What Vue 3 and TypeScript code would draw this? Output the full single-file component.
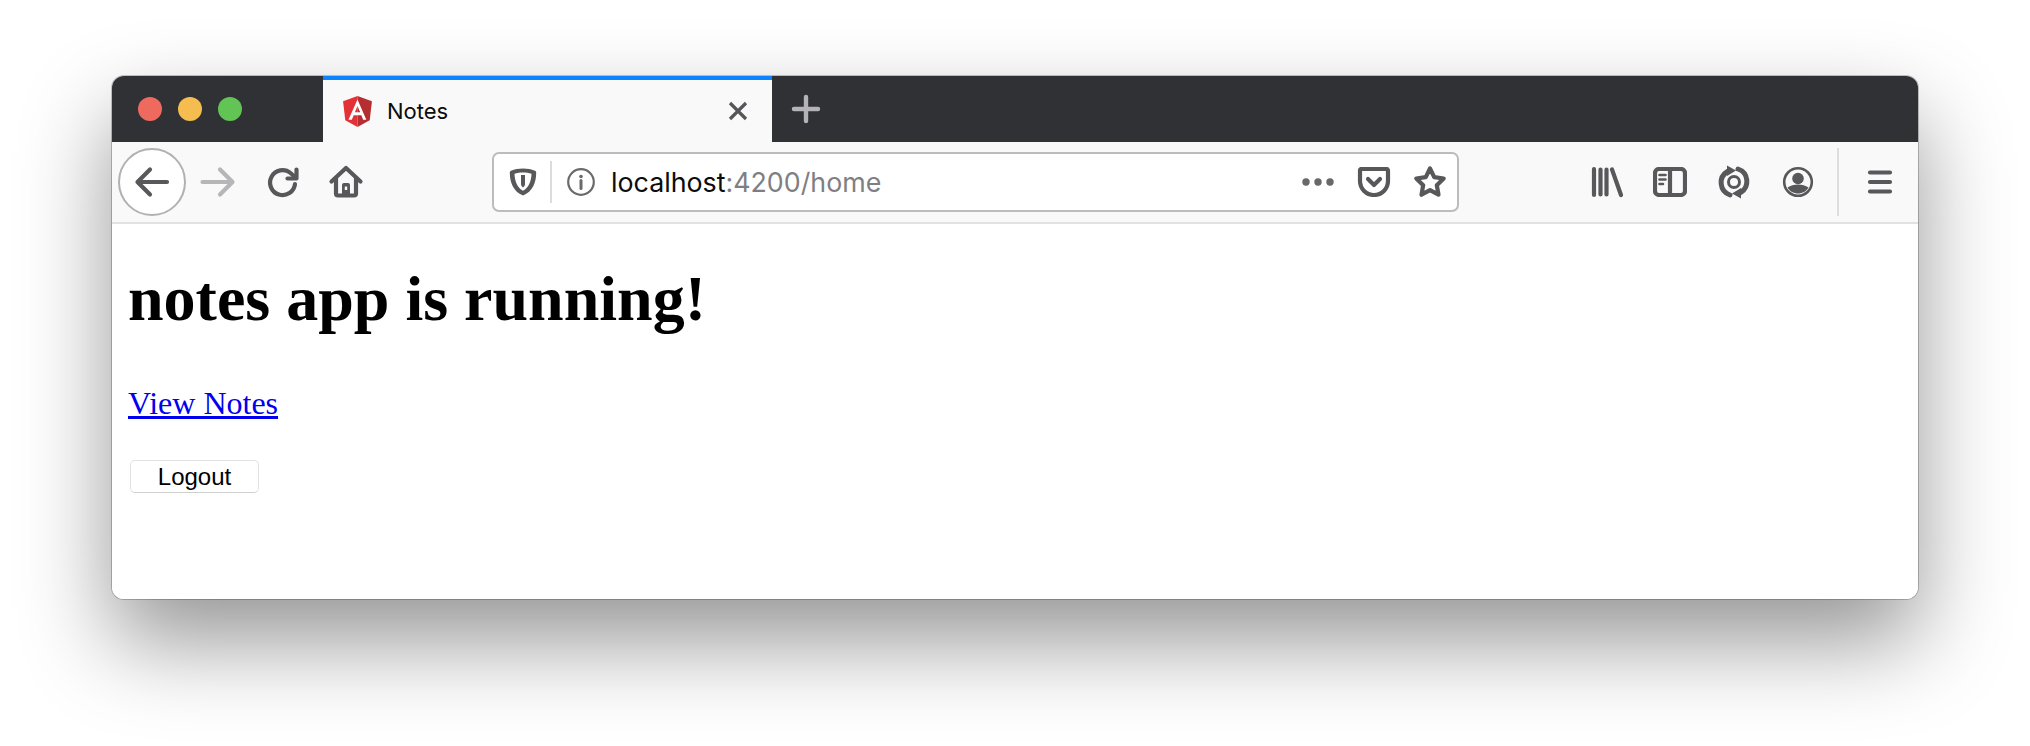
<template>
  <div class="stage">
    <div class="window">
      <div class="tabstrip">
        <div class="lights">
          <span v-for="c in lights" :key="c" class="light" :style="{ background: c }"></span>
        </div>
        <div class="tab">
          <svg class="favicon" viewBox="25 25 200 210" width="31" height="33">
            <polygon fill="#e23237" points="125,30 31.9,63.2 46.1,186.3 125,230" />
            <polygon fill="#b52e31" points="125,30 218.1,63.2 203.9,186.3 125,230" />
            <path fill="#fff" d="M125 52.1L66.8 182.6h21.7l11.7-29.2h49.4l11.7 29.2H182L125 52.1zM142 135.4h-34l17-40.9 17 40.9z" />
          </svg>
          <span class="tab-title">Notes</span>
          <svg class="tab-close" viewBox="0 0 24 24" width="24" height="24">
            <path d="M4 4l16 16M20 4L4 20" />
          </svg>
        </div>
        <svg class="new-tab" viewBox="0 0 30 30" width="30" height="30">
          <path d="M15 3v24M3 15h24" />
        </svg>
      </div>

      <div class="toolbar">
        <button class="nav back">
          <svg class="ico" viewBox="0 0 36 36" width="36" height="36">
            <path d="M3.500 18H33M16 5.500L3.500 18 16 30.500" />
          </svg>
        </button>
        <button class="nav forward">
          <svg class="ico" viewBox="0 0 36 36" width="36" height="36">
            <path d="M2.500 18H32M20 5.500L32.500 18 20 30.500" />
          </svg>
        </button>
        <button class="nav reload">
          <svg class="ico" viewBox="0 0 36 36" width="36" height="36">
            <path d="M30 20a12.500 12.500 0 1 1-4.500-11L30 13" />
            <path d="M31.500 5.500V14.500H22.500" />
          </svg>
        </button>
        <button class="nav home">
          <svg class="ico" viewBox="0 0 36 36" width="36" height="36">
            <path d="M3.500 17.500L18 4l14.500 13.500" />
            <path d="M8 14v15.500a2 2 0 0 0 2 2h16a2 2 0 0 0 2-2V14" />
            <path class="solid" d="M14 30V21a2 2 0 0 1 2-2h4a2 2 0 0 1 2 2v9zM16.800 22.500v3.500h2.400v-3.500z" fill-rule="evenodd" />
          </svg>
        </button>

        <div class="urlbar">
          <svg class="ico shield" viewBox="0 0 28 30" width="28" height="30">
            <path class="solid" fill-rule="evenodd" d="M14 1.500c4 0 8.500.8 12 2.200.8.300 1.200 1 1.200 1.800 0 10-3.500 19-13.200 23-9.700-4-13.200-13-13.200-23 0-.8.400-1.500 1.200-1.800C5.500 2.300 10 1.500 14 1.500zm0 4c-2.800 0-6 .5-8.500 1.300.2 7.400 2.700 13.800 8.500 17 5.800-3.200 8.300-9.600 8.500-17C20 6 16.800 5.500 14 5.500z" />
            <path class="solid" d="M12 8h4v9c0 1.500-.8 2.500-2 3.500-1.200-1-2-2-2-3.500z" />
          </svg>
          <span class="url-sep"></span>
          <svg class="info" viewBox="0 0 28 28" width="28" height="28">
            <circle cx="14" cy="14" r="12.800" />
            <circle class="dot" cx="14" cy="8.500" r="1.800" />
            <path d="M14 12.500v8" />
          </svg>
          <span class="url"><span class="host">localhost</span>:4200/home</span>
          <svg class="dots" viewBox="0 0 34 10" width="34" height="10">
            <circle cx="5" cy="5" r="3.700" />
            <circle cx="17" cy="5" r="3.700" />
            <circle cx="29" cy="5" r="3.700" />
          </svg>
          <svg class="ico pocket" viewBox="0 0 34 30" width="34" height="30">
            <path d="M3 3.500a1.500 1.500 0 0 1 1.500-1.500h25A1.500 1.500 0 0 1 31 3.500V14a14 14 0 0 1-28 0z" />
            <path d="M11 12l6 6 6-6" />
          </svg>
          <svg class="ico star" viewBox="0 0 34 34" width="34" height="34">
            <path d="M17 3.500l4.200 8.700 9.500 1.300-6.900 6.700 1.700 9.500-8.500-4.600-8.500 4.600 1.700-9.500-6.900-6.700 9.500-1.300z" />
          </svg>
        </div>

        <div class="tools">
          <button class="nav tool">
            <svg class="ico" viewBox="0 0 32 32" width="32" height="32">
              <path d="M3 3v26M9.500 3.500v25M15.500 3.500v25M21 3.500L30 29" />
            </svg>
          </button>
          <button class="nav tool">
            <svg class="ico" viewBox="0 0 34 30" width="34" height="30">
              <rect x="2" y="2" width="30" height="26" rx="4" />
              <path d="M17 2v26" />
              <path class="thin" d="M6.500 8h6M6.500 12.500h6M6.500 17h3.500" />
            </svg>
          </button>
          <button class="nav tool">
            <svg class="ico sync" viewBox="0 0 34 34" width="34" height="34">
              <path d="M10.500 6.500A13 13 0 0 0 13 30" />
              <path d="M23.500 27.500A13 13 0 0 0 21 4" />
              <path class="solid-path" d="M10 .5l9 5-9 5.500z" />
              <path class="solid-path" d="M24 33.500l-9-5 9-5.500z" />
              <circle class="thin" cx="17" cy="17" r="5.500" />
            </svg>
          </button>
          <button class="nav tool">
            <svg class="ico account" viewBox="0 0 32 32" width="32" height="32">
              <circle class="thin" cx="16" cy="16" r="13.800" />
              <circle class="solid" cx="16" cy="12.500" r="5.800" />
              <path class="solid" d="M5.500 21.500c3-2 6.500-3 10.500-3s7.500 1 10.500 3c-2 3.800-6 6-10.500 6s-8.500-2.200-10.500-6z" />
            </svg>
          </button>
          <span class="tool-sep"></span>
          <button class="nav menu">
            <svg class="ico" viewBox="0 0 28 28" width="28" height="28">
              <path d="M4 4.500h20M4 14h20M4 23.500h20" />
            </svg>
          </button>
        </div>
      </div>

      <div class="page">
        <h1>notes app is running!</h1>
        <p><a href="#">View Notes</a></p>
        <button class="logout">Logout</button>
      </div>
    </div>
  </div>
</template>

<script setup lang="ts">
const lights: string[] = ['#ee6a5f', '#f5bd4f', '#61c454']
</script>

<style>
html,
body {
  margin: 0;
  background: #fff;
  overflow: hidden;
}
</style>

<style scoped>
.stage {
  width: 2030px;
  height: 746px;
  box-sizing: border-box;
  padding: 76px 112px 0;
  background: #fff;
}

.window {
  width: 1806px;
  height: 523px;
  display: flex;
  flex-direction: column;
  overflow: hidden;
  border-radius: 12px;
  background: #fff;
  box-shadow:
    0 0 0 1px rgba(0, 0, 0, 0.22),
    0 42px 90px rgba(0, 0, 0, 0.42);
}

.tabstrip {
  height: 66px;
  flex: none;
  display: flex;
  background: #303135;
}

.lights {
  width: 211px;
  display: flex;
  align-items: center;
  gap: 16px;
  padding: 0 0 0 26px;
  box-sizing: border-box;
}

.light {
  width: 24px;
  height: 24px;
  border-radius: 50%;
}

.tab {
  width: 449px;
  display: flex;
  align-items: center;
  box-sizing: border-box;
  padding: 0 22px 0 19px;
  background: #f9f9fa;
  border-top: 4px solid #0a84ff;
}

.favicon {
  flex: none;
}

.tab-title {
  margin-left: 14px;
  font: 22px Inter, "Liberation Sans", sans-serif;
  color: #0c0c0d;
}

.tab-close {
  margin-left: auto;
  fill: none;
  stroke: #55565a;
  stroke-width: 3.2;
}

.new-tab {
  margin: 18px 0 0 19px;
  fill: none;
  stroke: #b4b4b7;
  stroke-width: 4.4;
  stroke-linecap: round;
}

.toolbar {
  height: 82px;
  flex: none;
  display: flex;
  align-items: center;
  box-sizing: border-box;
  padding-left: 6px;
  background: #f9f9fa;
  border-bottom: 2px solid #e1e1e2;
}

.nav {
  display: flex;
  align-items: center;
  justify-content: center;
  flex: none;
  height: 66px;
  padding: 0;
  border: 0;
  background: none;
}

.ico {
  fill: none;
  stroke: #58585b;
  stroke-width: 4.2;
  stroke-linecap: round;
  stroke-linejoin: round;
}

.ico .solid {
  fill: #58585b;
  stroke: none;
}

.ico .solid-path {
  fill: #58585b;
  stroke: none;
}

.ico .thin {
  stroke-width: 2.6;
}

.sync {
  stroke-width: 5;
}

.sync .thin {
  stroke-width: 3;
}

.back {
  width: 68px;
  height: 68px;
  box-sizing: border-box;
  border: 2px solid #b1b1b1;
  border-radius: 50%;
  background: #fff;
}

.forward {
  width: 64px;
}

.forward .ico {
  stroke: #b6b6b8;
}

.reload {
  width: 65px;
}

.home {
  width: 62px;
}

.urlbar {
  flex: none;
  width: 967px;
  height: 60px;
  margin-left: 115px;
  display: flex;
  align-items: center;
  box-sizing: border-box;
  padding: 0 10px 0 15px;
  background: #fff;
  border: 2px solid #bcbcbc;
  border-radius: 7px;
}

.url-sep {
  width: 2px;
  height: 42px;
  margin-left: 13px;
  background: #dcdcdc;
}

.info {
  margin-left: 15px;
  fill: none;
  stroke: #6a6a6c;
  stroke-width: 2.2;
}

.info .dot {
  fill: #6a6a6c;
  stroke: none;
}

.info path {
  stroke-width: 3;
  stroke-linecap: round;
}

.url {
  margin-left: 16px;
  font: 26.8px Inter, "Liberation Sans", sans-serif;
  color: #7f7f82;
}

.host {
  color: #0c0c0d;
}

.dots {
  margin-left: auto;
  fill: #68686a;
}

.pocket {
  margin-left: 22px;
}

.star {
  margin-left: 22px;
}

.tools {
  flex: none;
  display: flex;
  align-items: center;
  margin-left: 116px;
}

.tool {
  width: 63.6px;
}

.tool-sep {
  width: 2px;
  height: 68px;
  margin-left: 8px;
  background: #dededf;
}

.menu {
  width: 78px;
  padding-left: 4px;
}

.page {
  flex: 1;
  padding: 0 16px;
  background: #fff;
  font-family: "Liberation Serif", serif;
  color: #000;
}

h1 {
  margin: 42px 0 0;
  font-size: 64px;
  line-height: 66px;
  font-weight: 700;
}

p {
  margin: 53px 0 0;
  font-size: 32px;
  line-height: 36px;
}

a {
  color: #0000ee;
}

.logout {
  display: block;
  width: 129px;
  height: 33px;
  margin: 39px 0 0 2px;
  padding: 0;
  font: 24px "Liberation Sans", sans-serif;
  line-height: 30px;
  color: #000;
  background: #fff;
  border: 1px solid #e2e2e2;
  border-bottom-color: #d0d0d0;
  border-radius: 5px;
}
</style>
